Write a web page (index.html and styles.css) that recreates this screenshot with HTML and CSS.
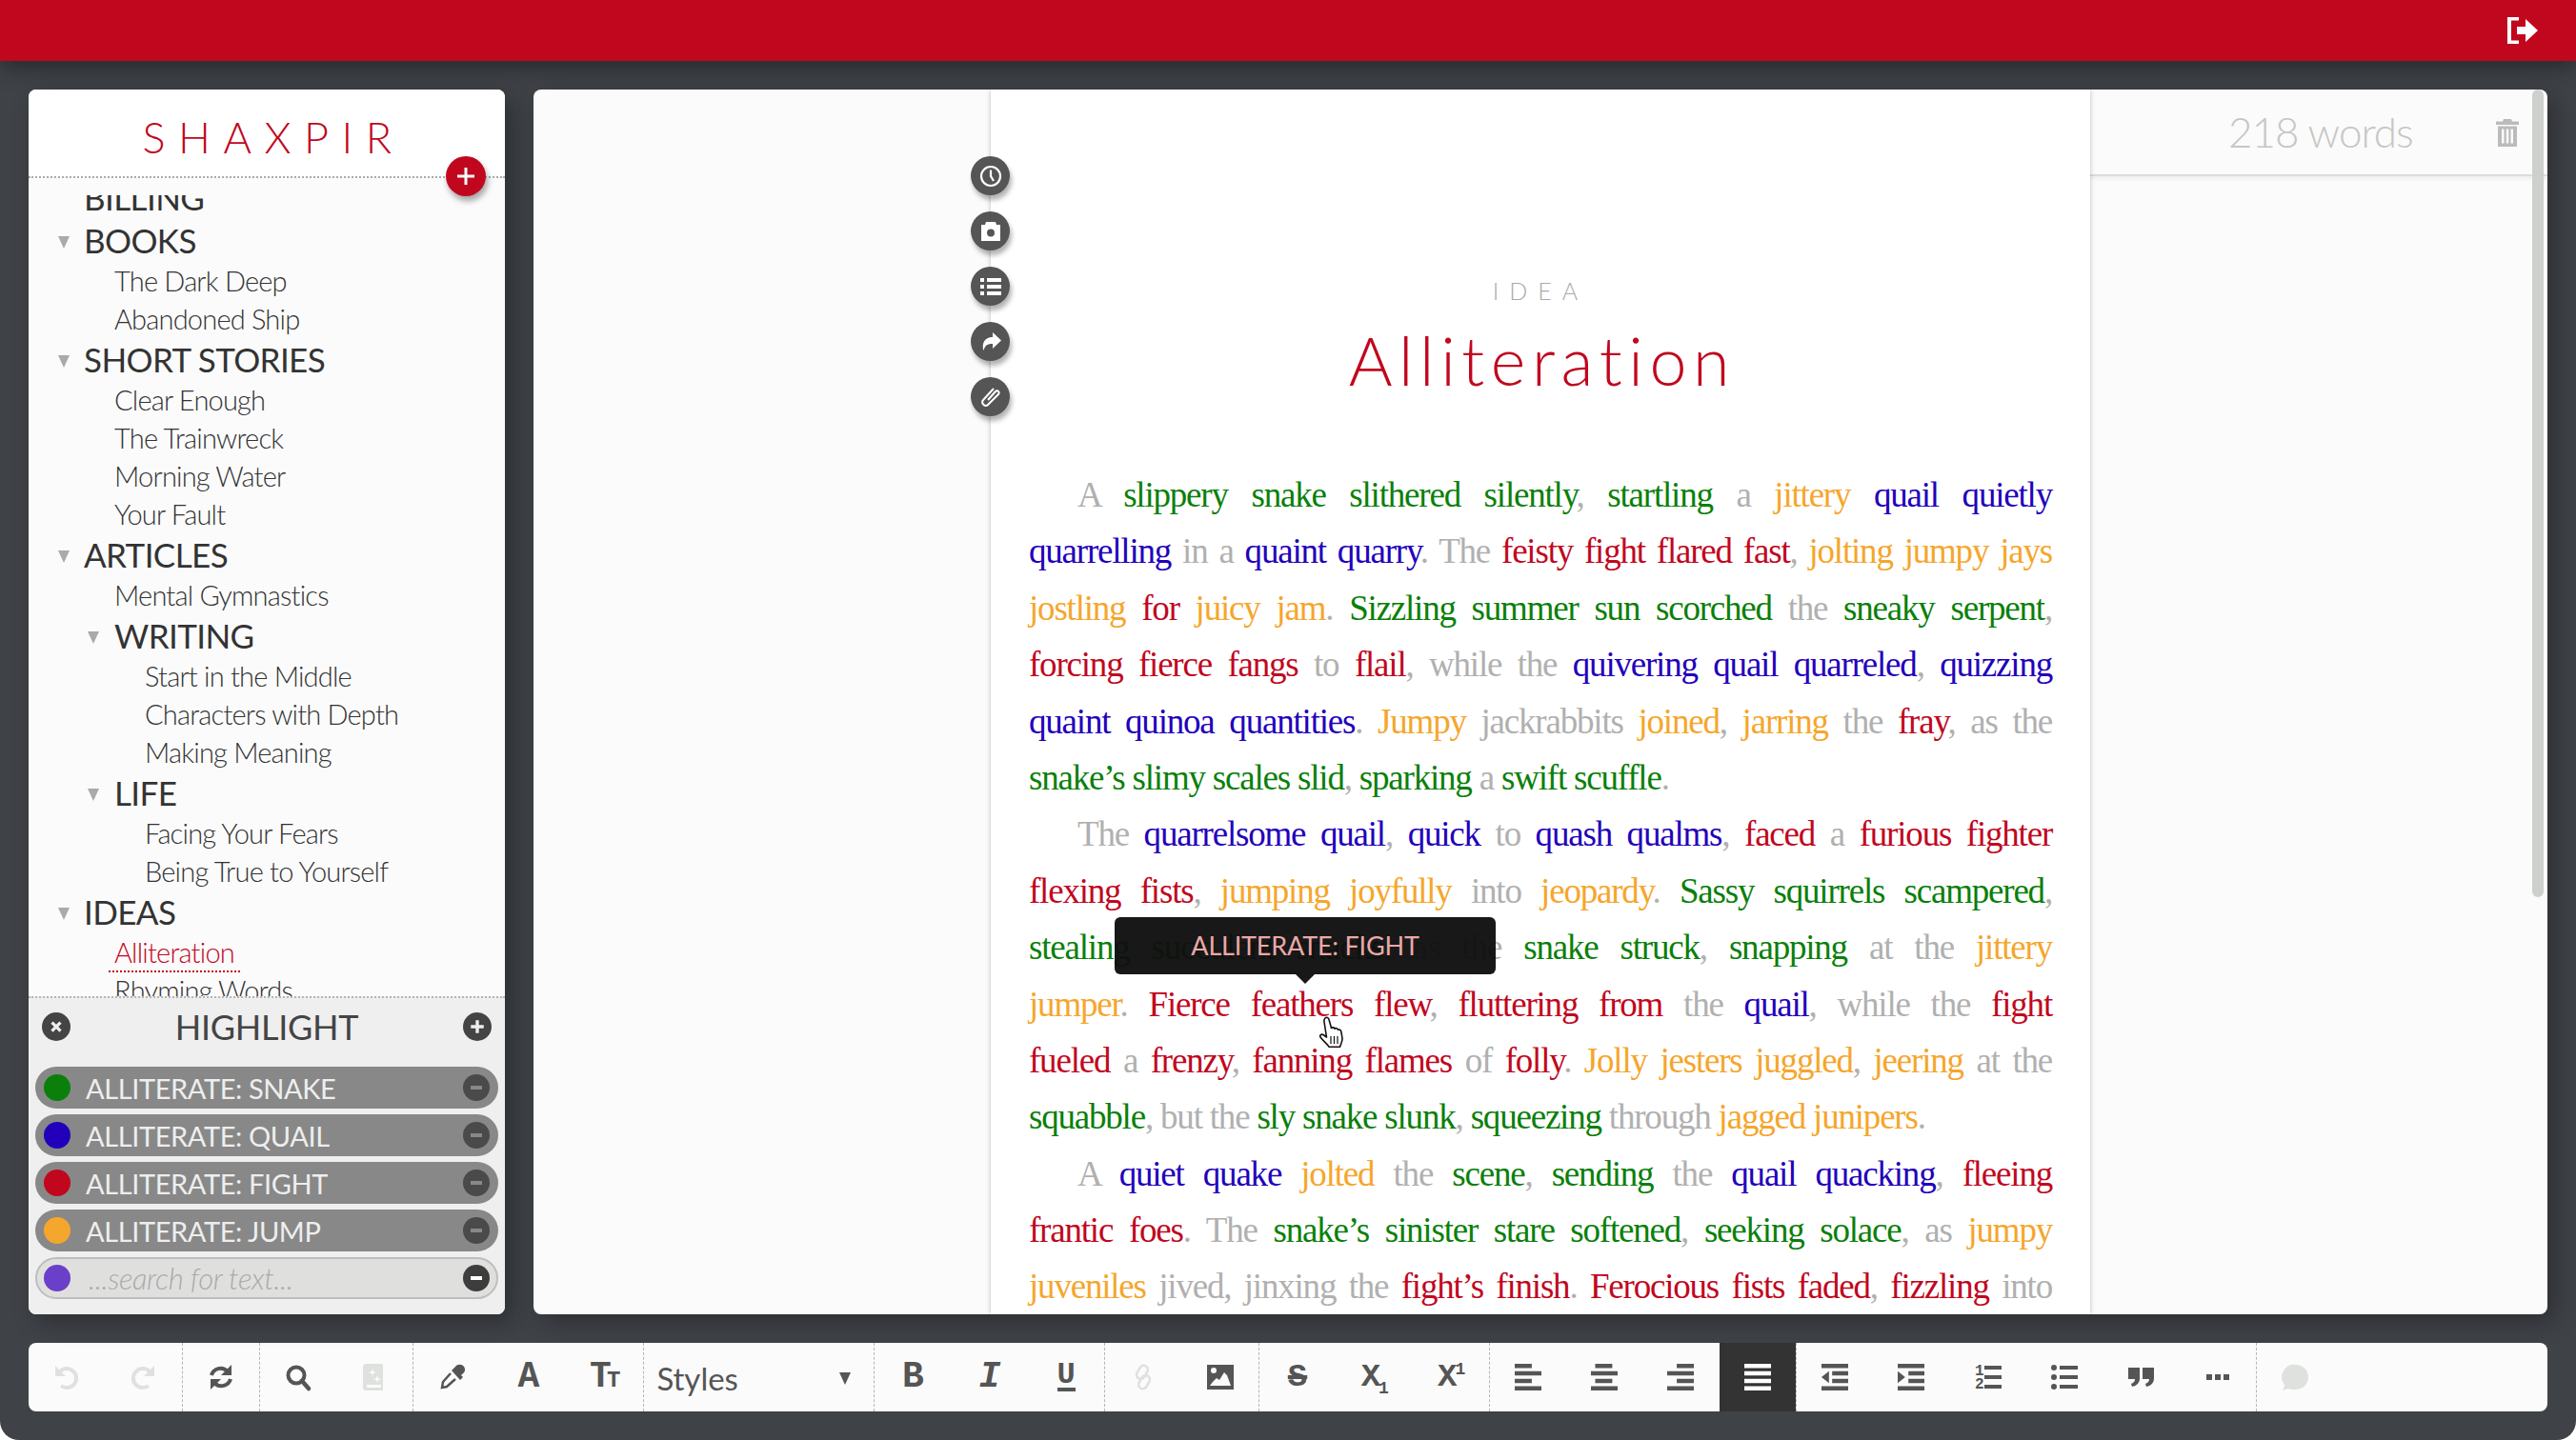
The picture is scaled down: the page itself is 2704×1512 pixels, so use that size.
FILE: index.html
```html
<!DOCTYPE html>
<html lang="en">

<head>
     <meta charset="UTF-8">
     <title>Shaxpir</title>
     <link rel="stylesheet" href="styles.css">
</head>

<body>
     <div class="app">
          <header class="topbar">
               <svg class="logout" viewBox="0 0 32 28"><path d="M0 0h12v3.500H4v21h8V28H0z"/><path d="M10 10h9V2l13 12-13 12v-8h-9z"/></svg>
          </header>

          <main class="main">
               <!-- left column -->
               <aside class="sidebar">
                    <div class="logo">SHAXPIR</div>
                    <button class="add-btn"><svg viewBox="0 0 20 20"><path d="M8.500 1h3v7.500H19v3h-7.500V19h-3v-7.500H1v-3h7.500z"/></svg></button>
                    <div class="tree">
                         <div class="row head first">BILLING</div>
                         <div class="row head open">BOOKS</div>
                         <div class="row leaf">The Dark Deep</div>
                         <div class="row leaf">Abandoned Ship</div>
                         <div class="row head open">SHORT STORIES</div>
                         <div class="row leaf">Clear Enough</div>
                         <div class="row leaf">The Trainwreck</div>
                         <div class="row leaf">Morning Water</div>
                         <div class="row leaf">Your Fault</div>
                         <div class="row head open">ARTICLES</div>
                         <div class="row leaf">Mental Gymnastics</div>
                         <div class="row head open sub">WRITING</div>
                         <div class="row leaf sub">Start in the Middle</div>
                         <div class="row leaf sub">Characters with Depth</div>
                         <div class="row leaf sub">Making Meaning</div>
                         <div class="row head open sub">LIFE</div>
                         <div class="row leaf sub">Facing Your Fears</div>
                         <div class="row leaf sub">Being True to Yourself</div>
                         <div class="row head open">IDEAS</div>
                         <div class="row leaf"><span class="current">Alliteration</span></div>
                         <div class="row leaf">Rhyming Words</div>
                    </div>
                    <section class="highlight">
                         <div class="hl-head">
                              <span class="round-btn"><svg viewBox="0 0 16 16"><path d="M3 5l2-2 3 3 3-3 2 2-3 3 3 3-2 2-3-3-3 3-2-2 3-3z"/></svg></span>
                              <span class="hl-title">HIGHLIGHT</span>
                              <span class="round-btn"><svg viewBox="0 0 16 16"><path d="M6.500 2h3v4.500H14v3H9.500V14h-3V9.500H2v-3h4.500z"/></svg></span>
                         </div>
                         <div class="pill"><i class="dot green"></i><span>ALLITERATE: SNAKE</span><b class="minus"></b></div>
                         <div class="pill"><i class="dot blue"></i><span>ALLITERATE: QUAIL</span><b class="minus"></b></div>
                         <div class="pill"><i class="dot red"></i><span>ALLITERATE: FIGHT</span><b class="minus"></b></div>
                         <div class="pill"><i class="dot orange"></i><span>ALLITERATE: JUMP</span><b class="minus"></b></div>
                         <div class="pill search"><i class="dot purple"></i><span>...search for text...</span><b class="minus"></b></div>
                    </section>
               </aside>

               <!-- document -->
               <section class="doc">
                    <div class="margin-left"></div>
                    <article class="sheet">
                         <div class="side-btns">
                              <span class="side-btn"><svg viewBox="0 0 24 24"><circle cx="12" cy="12" r="10" fill="none" stroke="#fff" stroke-width="2.200"/><path d="M12 5.500V12l3 5" fill="none" stroke="#fff" stroke-width="2.200"/></svg></span>
                              <span class="side-btn"><svg viewBox="0 0 24 24"><path fill-rule="evenodd" fill="#fff" d="M2 5h4l1-3h10l1 3h4v17H2zM12 9.500a4 4 0 1 0 0 8 4 4 0 0 0 0-8z"/></svg></span>
                              <span class="side-btn"><svg viewBox="0 0 24 24"><path fill="#fff" d="M1 3h4v4H1zM8 3h15v4H8zM1 10h4v4H1zM8 10h15v4H8zM1 17h4v4H1zM8 17h15v4H8z"/></svg></span>
                              <span class="side-btn"><svg viewBox="0 0 24 24"><path fill="#fff" d="M14 2l9 8.500-9 8.500v-5c-5 0-8 1-9.500 7C3 17 3 7 14 7z"/></svg></span>
                              <span class="side-btn"><svg viewBox="0 0 24 24"><path fill="none" stroke="#fff" stroke-width="2" d="M9 15l8-9c2-2 5 1 3 3L9 20c-3 3-8-2-5-5L15 3"/></svg></span>
                         </div>

                         <div class="eyebrow">IDEA</div>
                         <h1 class="title">Alliteration</h1>

                         <div class="body-text">
                              <p class="ln ind">A <span class="g">slippery snake slithered silently</span>, <span class="g">startling</span> a <span class="o">jittery</span> <span class="b">quail quietly</span></p>
                              <p class="ln"><span class="b">quarrelling</span> in a <span class="b">quaint quarry</span>. The <span class="r">feisty fight flared fast</span>, <span class="o">jolting jumpy jays</span></p>
                              <p class="ln"><span class="o">jostling</span> <span class="r">for</span> <span class="o">juicy jam</span>. <span class="g">Sizzling summer sun scorched</span> the <span class="g">sneaky serpent</span>,</p>
                              <p class="ln"><span class="r">forcing fierce fangs</span> to <span class="r">flail</span>, while the <span class="b">quivering quail quarreled</span>, <span class="b">quizzing</span></p>
                              <p class="ln"><span class="b">quaint quinoa quantities</span>. <span class="o">Jumpy</span> jackrabbits <span class="o">joined</span>, <span class="o">jarring</span> the <span class="r">fray</span>, as the</p>
                              <p class="ln end"><span class="g">snake’s slimy scales slid</span>, <span class="g">sparking</span> a <span class="g">swift scuffle</span>.</p>
                              <p class="ln ind">The <span class="b">quarrelsome quail</span>, <span class="b">quick</span> to <span class="b">quash qualms</span>, <span class="r">faced</span> a <span class="r">furious fighter</span></p>
                              <p class="ln"><span class="r">flexing fists</span>, <span class="o">jumping joyfully</span> into <span class="o">jeopardy</span>. <span class="g">Sassy squirrels scampered</span>,</p>
                              <p class="ln"><span class="g">stealing succulent snacks</span>, as the <span class="g">snake struck</span>, <span class="g">snapping</span> at the <span class="o">jittery</span></p>
                              <p class="ln"><span class="o">jumper</span>. <span class="r">Fierce feathers flew</span>, <span class="r">fluttering from</span> the <span class="b">quail</span>, while the <span class="r">fight</span></p>
                              <p class="ln"><span class="r">fueled</span> a <span class="r">frenzy</span>, <span class="r">fanning flames</span> of <span class="r">folly</span>. <span class="o">Jolly jesters juggled</span>, <span class="o">jeering</span> at the</p>
                              <p class="ln end"><span class="g">squabble</span>, but the <span class="g">sly snake slunk</span>, <span class="g">squeezing</span> through <span class="o">jagged junipers</span>.</p>
                              <p class="ln ind">A <span class="b">quiet quake</span> <span class="o">jolted</span> the <span class="g">scene</span>, <span class="g">sending</span> the <span class="b">quail quacking</span>, <span class="r">fleeing</span></p>
                              <p class="ln"><span class="r">frantic foes</span>. The <span class="g">snake’s sinister stare softened</span>, <span class="g">seeking solace</span>, as <span class="o">jumpy</span></p>
                              <p class="ln"><span class="o">juveniles</span> jived, jinxing the <span class="r">fight’s finish</span>. <span class="r">Ferocious fists faded</span>, <span class="r">fizzling</span> into</p>
                         </div>

                         <div class="tooltip">ALLITERATE: FIGHT</div>
                         <svg class="hand" viewBox="0 0 30 34"><path fill="#fff" stroke="#111" stroke-width="1.600" stroke-linejoin="round" d="M7 2c1.500-1.500 3.500-.5 4 1.500l2.500 9c1-1 3-.8 3.500.7 1-1 3-.5 3.500 1 1-.5 3 0 3.300 2l1.200 7c.3 3-1.500 6-2.500 9H11C9 29 5 26 2 22c-1-2 1-3.500 3-2.500l3.500 2.500L6 6c-.3-1.500 0-3 1-4z"/><path fill="none" stroke="#111" stroke-width="1.200" d="M13 21v8M16.500 21v8M20 21v8"/></svg>
                    </article>
                    <div class="margin-right">
                         <div class="stats">
                              <span class="words">218 words</span>
                              <svg class="trash" viewBox="0 0 24 29"><path fill-rule="evenodd" d="M8 0h8l1 2.500h7v3.500H0V2.500h7zM2 7.500h20V29H2zM6 10.500v15h2.500v-15zM10.800 10.500v15h2.500v-15zM15.500 10.500v15H18v-15z"/></svg>
                         </div>
                         <div class="scroll-thumb"></div>
                    </div>
               </section>
          </main>

          <!-- toolbar -->
          <nav class="toolbar">
               <div class="group">
                    <span class="tool off"><svg viewBox="0 0 28 28"><path fill="none" stroke="currentColor" stroke-width="4" d="M7 8a10 10 0 1 1 1 15"/><path d="M2 2v11h11z"/></svg></span>
                    <span class="tool off"><svg class="flip" viewBox="0 0 28 28"><path fill="none" stroke="currentColor" stroke-width="4" d="M7 8a10 10 0 1 1 1 15"/><path d="M2 2v11h11z"/></svg></span>
               </div>
               <div class="group">
                    <span class="tool"><svg viewBox="0 0 28 28"><path fill="none" stroke="currentColor" stroke-width="4" d="M4 12C6 5 15 2 21 8"/><path d="M25 1v11H14z"/><path fill="none" stroke="currentColor" stroke-width="4" d="M24 16c-2 7-11 10-17 4"/><path d="M3 27V16h11z"/></svg></span>
               </div>
               <div class="group">
                    <span class="tool"><svg viewBox="0 0 28 28"><circle cx="12" cy="12" r="8.500" fill="none" stroke="currentColor" stroke-width="4"/><path stroke="currentColor" stroke-width="4.500" stroke-linecap="round" d="M18 18l7 8"/></svg></span>
                    <span class="tool off"><svg viewBox="0 0 28 28"><path fill-rule="evenodd" d="M4 0h18l1 1v27H5c-2 0-3-1-3-3V2zM6 22v3h15v-3zM12 5l1 3 3 1-3 1-1 3-1-3-3-1 3-1zM17 12l1 3 3 1-3 1-1 3-1-3-3-1 3-1z"/></svg></span>
               </div>
               <div class="group">
                    <span class="tool"><svg viewBox="0 0 28 28"><path d="M16 4l1-1c2-3 7-3 9 0s1 6-2 8l-1 1 2 2-3 3-9-10 3-3z"/><path fill="none" stroke="currentColor" stroke-width="2.500" d="M12 10L4 19l-1 6 5-1 9-8"/></svg></span>
                    <span class="tool"><span class="glyph">A</span></span>
                    <span class="tool"><span class="glyph">T<small>T</small></span></span>
               </div>
               <div class="group styles"><span>Styles</span><i class="caret"></i></div>
               <div class="group">
                    <span class="tool"><span class="glyph">B</span></span>
                    <span class="tool"><span class="glyph it">I</span></span>
                    <span class="tool"><span class="glyph under">U</span></span>
               </div>
               <div class="group">
                    <span class="tool off"><svg viewBox="-2 -2 32 32"><g fill="none" stroke="currentColor" stroke-width="3" transform="rotate(30 14 14)"><rect x="5" y="1" width="10" height="17" rx="5"/><rect x="13" y="10" width="10" height="17" rx="5"/></g></svg></span>
                    <span class="tool"><svg viewBox="0 0 28 28"><path fill-rule="evenodd" d="M0 1h28v26H0zM7 4a3 3 0 1 0 0 6 3 3 0 0 0 0-6zM3 23h22l-4-11-3-3-5 8-3-2-4 4z"/></svg></span>
               </div>
               <div class="group">
                    <span class="tool"><span class="glyph strike">S</span></span>
                    <span class="tool"><span class="glyph thin">X<sub>1</sub></span></span>
                    <span class="tool"><span class="glyph thin">X<sup>1</sup></span></span>
               </div>
               <div class="group">
                    <span class="tool"><svg viewBox="0 0 25 25"><path d="M0 0h16v4H0zM0 7h25v4H0zM0 14h16v4H0zM0 21h25v4H0z"/></svg></span>
                    <span class="tool"><svg viewBox="0 0 25 25"><path d="M4 0h16v4H4zM0 7h25v4H0zM4 14h16v4H4zM0 21h25v4H0z"/></svg></span>
                    <span class="tool"><svg viewBox="0 0 25 25"><path d="M9 0h16v4H9zM0 7h25v4H0zM9 14h16v4H9zM0 21h25v4H0z"/></svg></span>
                    <span class="tool on"><svg viewBox="0 0 25 25"><path d="M0 0h25v4H0zM0 7h25v4H0zM0 14h25v4H0zM0 21h25v4H0z"/></svg></span>
               </div>
               <div class="group">
                    <span class="tool"><svg viewBox="0 0 25 25"><path d="M0 0h25v4H0zM10 7h15v4H10zM10 14h15v4H10zM0 21h25v4H0zM0 12.500L7 7v11z"/></svg></span>
                    <span class="tool"><svg viewBox="0 0 25 25"><path d="M0 0h25v4H0zM10 7h15v4H10zM10 14h15v4H10zM0 21h25v4H0zM7 12.500L0 7v11z"/></svg></span>
                    <span class="tool"><svg viewBox="0 0 28 28"><text x="0" y="12" class="num">1</text><text x="0" y="26" class="num">2</text><path d="M10 2h18v4H10zM10 12h18v4H10zM10 22h18v4H10z"/></svg></span>
                    <span class="tool"><svg viewBox="0 0 28 28"><circle cx="3" cy="4" r="3"/><circle cx="3" cy="14" r="3"/><circle cx="3" cy="24" r="3"/><path d="M9 2h19v4H9zM9 12h19v4H9zM9 22h19v4H9z"/></svg></span>
                    <span class="tool"><svg viewBox="0 0 28 28"><path d="M1 4h12v11c0 5-3 8-8 9l-1-3c3-1 4-3 4-5H1zM16 4h12v11c0 5-3 8-8 9l-1-3c3-1 4-3 4-5h-7z"/></svg></span>
                    <span class="tool"><svg viewBox="0 0 28 28"><path d="M2 11h6v6H2zM11 11h6v6h-6zM20 11h6v6h-6z"/></svg></span>
               </div>
               <div class="group last">
                    <span class="tool off"><svg viewBox="0 0 28 28"><path d="M15 1a13 13 0 0 1 0 26c-3 0-5 0-8-1-2 1-4 1-6 2 1-2 2-4 2-6A13 13 0 0 1 15 1z"/></svg></span>
               </div>
          </nav>
     </div>
</body>

</html>
```

FILE: styles.css
```css
* {
     box-sizing: border-box;
}

html,
body {
     margin: 0;
     padding: 0;
     background-color: #fff;
}

.app {
     width: 2704px;
     height: 1512px;
     overflow: hidden;
     display: flex;
     flex-direction: column;
     background-color: #3f4247;
     border-radius: 0 0 20px 20px;
     font-family: Lato, "Open Sans", sans-serif;
}

/* top bar */
.topbar {
     height: 64px;
     flex: none;
     display: flex;
     align-items: center;
     justify-content: flex-end;
     padding-right: 40px;
     background-color: #c1071e;
     box-shadow: 0 8px 22px rgba(0, 0, 0, 0.35);
     position: relative;
}

.logout {
     width: 32px;
     height: 28px;
     fill: #fff;
}

.main {
     height: 1286px;
     flex: none;
     margin: 30px 30px 0;
     display: flex;
     gap: 30px;
}

/* sidebar */
.sidebar {
     width: 500px;
     flex: none;
     position: relative;
     display: flex;
     flex-direction: column;
     background-color: #fbfbfb;
     border-radius: 8px;
     overflow: hidden;
     box-shadow: 8px 8px 24px rgba(0, 0, 0, 0.3);
}

.logo {
     height: 93px;
     flex: none;
     padding: 23px 0 0 14px;
     background-color: #fff;
     border-bottom: 2px dotted #aaa;
     color: #c1071e;
     font-size: 45px;
     font-weight: 300;
     line-height: 54px;
     letter-spacing: 13.500px;
     text-align: center;
}

.add-btn {
     position: absolute;
     left: 438px;
     top: 70px;
     width: 42px;
     height: 42px;
     padding: 0;
     border: none;
     border-radius: 50%;
     background-color: #c1071e;
     box-shadow: 2px 5px 6px rgba(0, 0, 0, 0.35);
     display: flex;
     align-items: center;
     justify-content: center;
}

.add-btn svg {
     width: 20px;
     height: 20px;
     fill: #fff;
}

.tree {
     flex: 1;
     min-height: 0;
     margin-top: 18px;
     overflow: hidden;
     color: #333;
}

.row {
     position: relative;
     white-space: nowrap;
}

.head {
     height: 45px;
     line-height: 45px;
     padding-left: 58px;
     font-size: 35px;
     letter-spacing: -0.6px;
}

.head.first {
     margin-top: -20px;
}

.head.sub {
     padding-left: 90px;
}

.head.open::before {
     content: "";
     position: absolute;
     left: 31px;
     top: 18px;
     border-style: solid;
     border-width: 13px 6px 0;
     border-color: #aaa transparent transparent;
}

.head.open.sub::before {
     left: 62px;
}

.leaf {
     height: 40px;
     line-height: 40px;
     padding-left: 90px;
     font-size: 29px;
     font-weight: 300;
     letter-spacing: -0.8px;
}

.leaf.sub {
     padding-left: 122px;
}

.current {
     display: inline-block;
     margin-left: -6px;
     padding: 0 6px;
     height: 41px;
     color: #c1071e;
     border-bottom: 2px dotted #c1071e;
}

/* highlight box */
.highlight {
     height: 334px;
     flex: none;
     padding: 0 7px 16px;
     display: flex;
     flex-direction: column;
     gap: 6px;
     background-color: #efefef;
     border-top: 2px dotted #b5b5b5;
     position: relative;
}

.hl-head {
     height: 60px;
     margin-bottom: 6px;
     flex: none;
     display: flex;
     align-items: center;
     justify-content: space-between;
     padding: 0 7px;
}

.hl-title {
     color: #444;
     font-size: 36px;
     font-weight: 400;
     letter-spacing: -0.3px;
}

.round-btn {
     width: 30px;
     height: 30px;
     border-radius: 50%;
     background-color: #444;
     display: flex;
     align-items: center;
     justify-content: center;
}

.round-btn svg {
     width: 18px;
     height: 18px;
     fill: #eee;
}

.pill {
     height: 44px;
     flex: none;
     display: flex;
     align-items: center;
     padding: 0 9px;
     border-radius: 22px;
     background-color: #888;
     color: #eee;
     font-size: 29px;
     letter-spacing: -0.4px;
     font-weight: 400;
}

.pill span {
     flex: 1;
     margin-left: 16px;
}

.dot {
     width: 28px;
     height: 28px;
     border-radius: 50%;
}

.green { background-color: #0a800a; }
.blue { background-color: #2200bb; }
.red { background-color: #c1071e; }
.orange { background-color: #f5a62c; }
.purple { background-color: #6a3fc9; }

.minus {
     width: 28px;
     height: 28px;
     border-radius: 50%;
     background-color: #4a4a4a;
     position: relative;
}

.minus::after {
     content: "";
     position: absolute;
     left: 8px;
     right: 8px;
     top: 12px;
     height: 4px;
     background-color: #888;
}

.pill.search {
     background-color: #dfe0de;
     border: 2px solid #bdbdbd;
     padding: 0 7px;
     color: #aaa;
     font-size: 31px;
     font-style: italic;
     font-weight: 300;
}

.pill.search span {
     margin-left: 19px;
}

.pill.search .minus {
     background-color: #3d3d3d;
}

.pill.search .minus::after {
     background-color: #fff;
}

/* document */
.doc {
     width: 2114px;
     flex: none;
     display: flex;
     background-color: #fbfbfb;
     border-radius: 8px;
     overflow: hidden;
     box-shadow: 8px 8px 24px rgba(0, 0, 0, 0.3);
}

.margin-left {
     width: 480px;
     flex: none;
}

.sheet {
     width: 1154px;
     flex: none;
     position: relative;
     background-color: #fff;
     box-shadow: 0 0 5px rgba(0, 0, 0, 0.25);
     padding: 196px 40px 0;
     z-index: 1;
}

.side-btns {
     position: absolute;
     left: -21px;
     top: 70px;
     display: flex;
     flex-direction: column;
     gap: 17px;
}

.side-btn {
     width: 41px;
     height: 41px;
     border-radius: 50%;
     background-color: #555;
     box-shadow: 2px 5px 5px rgba(0, 0, 0, 0.3);
     display: flex;
     align-items: center;
     justify-content: center;
}

.side-btn svg {
     width: 24px;
     height: 24px;
}

.eyebrow {
     height: 30px;
     color: #aaa;
     font-size: 25px;
     font-weight: 300;
     line-height: 30px;
     letter-spacing: 11px;
     text-align: center;
}

.title {
     margin: 0;
     height: 104px;
     padding: 10px 0 0 4px;
     color: #c1071e;
     font-size: 70px;
     font-weight: 300;
     line-height: 96px;
     letter-spacing: 6.600px;
     text-align: center;
}

.body-text {
     margin-top: 66px;
     color: #b0b0b0;
     font-family: "Liberation Serif", serif;
     font-size: 37px;
     letter-spacing: -1.200px;
}

.ln {
     margin: 0;
     height: 59.400px;
     line-height: 59.400px;
     text-align: justify;
     text-align-last: justify;
}

.ln.ind {
     padding-left: 51px;
}

.ln.end {
     text-align-last: left;
}

.g { color: #0a800a; }
.b { color: #2200bb; }
.r { color: #c1071e; }
.o { color: #f5a62c; }

.tooltip {
     position: absolute;
     left: 130px;
     top: 869px;
     width: 400px;
     height: 60px;
     border-radius: 6px;
     background-color: rgba(15, 15, 15, 0.96);
     color: #eaa9a9;
     font-size: 27px;
     line-height: 60px;
     letter-spacing: -0.2px;
     text-align: center;
}

.tooltip::after {
     content: "";
     position: absolute;
     left: 190px;
     top: 60px;
     border-style: solid;
     border-width: 10px 10px 0;
     border-color: rgba(15, 15, 15, 0.96) transparent transparent;
}

.hand {
     position: absolute;
     left: 344px;
     top: 973px;
     width: 30px;
     height: 34px;
}

.margin-right {
     width: 480px;
     flex: none;
     position: relative;
}

.stats {
     height: 91px;
     display: flex;
     align-items: center;
     padding: 0 0 2px 145px;
     border-bottom: 2px solid #dcdcdc;
     box-shadow: 0 3px 4px rgba(0, 0, 0, 0.05);
}

.words {
     color: #c5c7c4;
     font-size: 44px;
     font-weight: 300;
     letter-spacing: -1px;
}

.trash {
     position: absolute;
     left: 426px;
     top: 31px;
     width: 24px;
     height: 29px;
     fill: #bbb;
}

.scroll-thumb {
     position: absolute;
     left: 464px;
     top: 0;
     width: 12px;
     height: 848px;
     border-radius: 6px;
     background-color: #cdd0cc;
}

/* bottom toolbar */
.toolbar {
     height: 72px;
     flex: none;
     margin: 30px 30px 0;
     display: flex;
     background-color: #fbfbfb;
     border-radius: 8px;
     overflow: hidden;
}

.group {
     flex: none;
     display: flex;
     border-right: 1.500px dashed #b5b5b5;
}

.group.last {
     flex: 1;
     border-right: none;
}

.tool {
     width: 80.300px;
     height: 72px;
     flex: none;
     display: flex;
     align-items: center;
     justify-content: center;
     color: #555;
}

.tool svg {
     width: 28px;
     height: 28px;
     fill: currentColor;
     overflow: visible;
}

.tool .flip {
     transform: scaleX(-1);
}

.tool.off {
     color: #dfe1df;
}

.tool.on {
     background-color: #333;
     color: #fff;
}

.glyph {
     font-family: "Liberation Mono", monospace;
     font-size: 38px;
     font-weight: 700;
     line-height: 1;
     color: #555;
}

.glyph small {
     font-size: 24px;
     margin-left: -5px;
}

.glyph.it {
     font-style: italic;
}

.glyph.under {
     border-bottom: 4px solid #555;
     line-height: 26px;
     font-size: 32px;
}

.glyph.strike {
     text-decoration: line-through;
     text-decoration-thickness: 4px;
     font-size: 34px;
}

.glyph.thin {
     font-size: 34px;
     letter-spacing: -2px;
}

.glyph sub,
.glyph sup {
     font-size: 18px;
     line-height: 0;
}

.num {
     font-family: "Liberation Mono", monospace;
     font-size: 16px;
     font-weight: 700;
}

.styles {
     width: 242px;
     align-items: center;
     justify-content: space-between;
     padding: 2px 24px 0 13px;
     color: #555;
     font-size: 33px;
     font-weight: 400;
}

.caret {
     border-style: solid;
     border-width: 13px 6px 0;
     border-color: #555 transparent transparent;
}
```
